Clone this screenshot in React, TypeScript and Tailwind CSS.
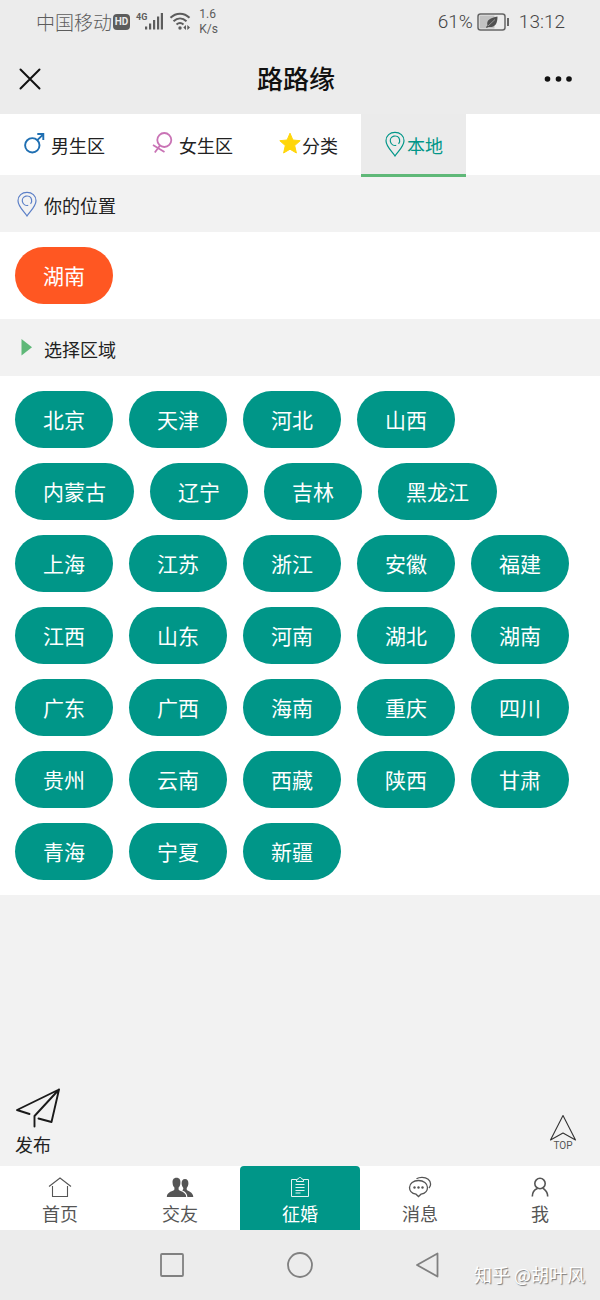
import { useState } from 'react';
import type { ReactNode } from 'react';

const provinces = [
  '北京', '天津', '河北', '山西', '内蒙古', '辽宁', '吉林', '黑龙江',
  '上海', '江苏', '浙江', '安徽', '福建', '江西', '山东', '河南', '湖北', '湖南',
  '广东', '广西', '海南', '重庆', '四川', '贵州', '云南', '西藏', '陕西', '甘肃',
  '青海', '宁夏', '新疆',
];

function PinIcon({ className }: { className?: string }) {
  return (
    <svg viewBox="0 0 22 26" fill="none" stroke="currentColor" strokeWidth="1.200" className={`w-[22px] h-[26px] shrink-0 ${className ?? ''}`}>
      <path d="M11 25C8.5 21 2 15.500 2 9.700C2 4.700 6 1.300 11 1.300S20 4.700 20 9.700C20 15.500 13.500 21 11 25Z" />
      <circle cx="11" cy="9.700" r="4.700" strokeDasharray="26 3.500" transform="rotate(75 11 9.700)" />
    </svg>
  );
}

function MaleIcon() {
  return (
    <svg viewBox="0 0 22 24" fill="none" stroke="#1f6fb2" strokeWidth="1.900" className="w-[22px] h-6 shrink-0">
      <circle cx="9.300" cy="13.300" r="7.200" />
      <path d="M14.300 8.200L20.200 2.300M14.300 2H20.300V8" />
    </svg>
  );
}

function FemaleIcon() {
  return (
    <svg viewBox="0 0 22 24" fill="none" stroke="#c973b5" strokeWidth="1.800" className="w-[22px] h-6 shrink-0">
      <circle cx="13.300" cy="8" r="7" />
      <path d="M9 13.500L3.800 20.500M2 13L13.500 20" />
    </svg>
  );
}

function StarIcon() {
  return (
    <svg viewBox="0 0 22 24" fill="#ffd60a" stroke="#ffd60a" strokeWidth="1" strokeLinejoin="round" className="w-[22px] h-6 shrink-0">
      <path d="M11 1.200L13.900 8L21.200 8.700L15.700 13.600L17.400 21L11 17.200L4.600 21L6.300 13.600L.8 8.700L8.100 8Z" />
    </svg>
  );
}

const topTabs: { id: string; label: string; icon: ReactNode; gap: string }[] = [
  { id: 'male', label: '男生区', icon: <MaleIcon />, gap: 'gap-1.5' },
  { id: 'female', label: '女生区', icon: <FemaleIcon />, gap: 'gap-1.5' },
  { id: 'category', label: '分类', icon: <StarIcon />, gap: 'gap-px' },
  { id: 'local', label: '本地', icon: <PinIcon />, gap: 'gap-px' },
];

const bottomTabs: { id: string; label: string; icon: ReactNode }[] = [
  {
    id: 'home',
    label: '首页',
    icon: (
      <svg viewBox="0 0 28 24" fill="none" stroke="currentColor" strokeWidth="1.1" className="w-7 h-6">
        <path d="M3 11.500L14 3L25 11.500M6.500 11V21.500H21.500V11" />
      </svg>
    ),
  },
  {
    id: 'friends',
    label: '交友',
    icon: (
      <svg viewBox="0 0 28 24" fill="currentColor" className="w-7 h-6">
        <path d="M10.500 2.800C7.500 2.800 6.300 5 6.600 8C6.700 10 7.400 11.600 8.400 12.600V14.500C7.500 16.500 1 16.300 .8 22H20.200C20 16.300 13.500 16.500 12.600 14.500V12.600C13.600 11.600 14.300 10 14.400 8C14.700 5 13.500 2.800 10.500 2.800Z" />
        <path d="M19 4C16.700 4 15.600 5.800 15.600 8.300C15.600 10.500 16.500 12 17.300 13C17.300 14.500 16.800 15 16.300 15.400C19.500 16.700 21.200 18.500 21.400 22H27.300C27.200 17 21.500 16.500 20.700 14.600V13C21.600 12 22.400 10.500 22.400 8.300C22.400 5.800 21.300 4 19 4Z" />
      </svg>
    ),
  },
  {
    id: 'marriage',
    label: '征婚',
    icon: (
      <svg viewBox="0 0 28 24" fill="none" stroke="currentColor" strokeWidth="1" className="w-7 h-6 opacity-90">
        <path d="M10.500 4.500H5.500V21.500H22.500V4.500H17.500M10.500 6.500V4.500L12.300 4C12.300 1.900 15.700 1.900 15.700 4L17.500 4.500V6.500Z" />
        <path d="M9.500 9.500H18.500M9.500 12.500H18.500M9.500 15.500H18.500M9.500 18H14.500" />
      </svg>
    ),
  },
  {
    id: 'messages',
    label: '消息',
    icon: (
      <svg viewBox="0 0 28 24" fill="none" stroke="currentColor" strokeWidth="1.300" className="w-7 h-6">
        <path d="M12.500 5.500C7.500 5.500 3.500 8.300 3.500 12.500C3.500 16 6.300 18.500 10 19.200L12.500 21.500L15 19.200C18.700 18.500 21.500 16 21.500 12.500C21.500 8.300 17.500 5.500 12.500 5.500Z" />
        <path d="M10.500 3.700C12 2.700 14 2.300 16 2.300C21 2.300 24.600 5 24.600 9C24.600 10.800 24 12 23 13" />
        <g fill="currentColor" stroke="none">
          <circle cx="8.500" cy="12.500" r="1.200" />
          <circle cx="12.500" cy="12.500" r="1.200" />
          <circle cx="16.500" cy="12.500" r="1.200" />
        </g>
      </svg>
    ),
  },
  {
    id: 'me',
    label: '我',
    icon: (
      <svg viewBox="0 0 28 24" fill="none" stroke="currentColor" strokeWidth="1.600" className="w-7 h-6">
        <circle cx="14" cy="8.500" r="5.200" />
        <path d="M11.500 13.500C8 14.800 6.300 17.500 6.300 21.500M17 13.200C18.500 14.800 21.700 16 21.700 21.500" />
      </svg>
    ),
  },
];

function StatusBar() {
  return (
    <div className="h-11 pl-9 pr-[35px] flex items-center justify-between text-[#5c5c5c]">
      <div className="flex items-center">
        <span className="text-[19px] leading-6 font-light">中国移动</span>
        <span className="ml-px w-[17px] h-4 rounded-sm bg-[#5c5c5c] text-[#ebebeb] text-[10px] leading-4 font-bold text-center font-['Roboto',sans-serif]">HD</span>
        <span className="ml-1.5 self-start pt-1 text-[9px] leading-3 font-bold font-['Roboto',sans-serif]">4G</span>
        <svg viewBox="0 0 18 18" fill="currentColor" className="-ml-0.5 mb-0.5 w-[18px] h-[18px]">
          <rect x="0" y="14.500" width="2.200" height="3" />
          <rect x="4" y="11.500" width="2.200" height="6" />
          <rect x="8" y="8" width="2.200" height="9.500" />
          <rect x="12" y="4.500" width="2.200" height="13" />
          <rect x="15.800" y="1" width="2.200" height="16.500" />
        </svg>
        <svg viewBox="0 0 22 18" fill="none" stroke="currentColor" strokeWidth="2" className="ml-1.5 mb-0.5 w-[22px] h-[18px]">
          <path d="M1.500 5.800C7 .3 15 .3 20.500 5.800M4.500 9.300C8.500 5.500 13.500 5.500 17.500 9.300M7.500 12.500C9.800 10.500 12.200 10.500 14.500 12.500" />
          <circle cx="11" cy="16" r="1.700" fill="currentColor" stroke="none" />
          <path d="M17 13L14.300 15.500L17 18ZM18.300 13L21 15.500L18.300 18Z" fill="currentColor" stroke="none" />
        </svg>
        <span className="ml-2 flex flex-col text-xs leading-[15px] font-['Roboto',sans-serif]">
          <span>1.6</span>
          <span>K/s</span>
        </span>
      </div>
      <div className="flex items-center font-['Roboto',sans-serif] text-[19px] leading-6 font-light text-[#444]">
        <span>61%</span>
        <svg viewBox="0 0 34 18" className="ml-1 mr-2 w-[34px] h-[18px]">
          <rect x="1" y="1" width="27" height="16" rx="2.500" fill="none" stroke="#666" strokeWidth="1.500" />
          <rect x="2.500" y="2.500" width="15" height="13" fill="#c2c2c2" />
          <rect x="30" y="5" width="2" height="8" fill="#666" />
          <path d="M20.500 3.500C20.500 11 18 14.500 11.500 14L9.500 15L9 14L10.500 12.500C9 7 13.500 4.800 20.500 3.500Z" fill="#505050" />
          <path d="M11 13L18 6.500" stroke="#b5b5b5" strokeWidth=".7" />
        </svg>
        <span>13:12</span>
      </div>
    </div>
  );
}

function SectionTitle({ icon, children }: { icon: ReactNode; children: ReactNode }) {
  return (
    <h2 className="h-[57px] px-4 flex items-center gap-1.5 bg-[#f2f2f2] text-lg leading-6">
      {icon}
      <span className="pt-0.5">{children}</span>
    </h2>
  );
}

function RegionButton({ name, active, onClick }: { name: string; active?: boolean; onClick?: () => void }) {
  return (
    <button
      type="button"
      onClick={onClick}
      className={`h-[57px] px-7 pb-0.5 rounded-full text-[21px] leading-8 text-white ${active ? 'bg-[#ff5722]' : 'bg-[#009688]'}`}
    >
      {name}
    </button>
  );
}

export default function App() {
  const [topTab, setTopTab] = useState('local');
  const [bottomTab, setBottomTab] = useState('marriage');
  const [location, setLocation] = useState('湖南');

  return (
    <div className="relative min-h-screen flex flex-col bg-[#f2f2f2] text-[#222] font-['Noto_Sans_CJK_SC',sans-serif]">
      <header className="bg-[#ececec]">
        <StatusBar />
        <div className="h-[70px] pl-[18px] pr-[26px] flex items-center justify-between text-[#111]">
          <button type="button" aria-label="关闭" className="w-8">
            <svg viewBox="0 0 24 24" fill="none" stroke="currentColor" strokeWidth="2" strokeLinecap="round" className="w-6 h-6">
              <path d="M2.500 2.500L21.500 21.500M21.500 2.500L2.500 21.500" />
            </svg>
          </button>
          <h1 className="pb-0.5 text-[26px] leading-8 font-medium">路路缘</h1>
          <button type="button" aria-label="更多" className="w-8">
            <svg viewBox="0 0 32 8" fill="currentColor" className="w-8 h-2">
              <circle cx="5.500" cy="4" r="2.800" />
              <circle cx="16.500" cy="4" r="2.800" />
              <circle cx="27" cy="4" r="2.800" />
            </svg>
          </button>
        </div>
      </header>

      {/* 顶部分类 */}
      <nav className="h-[61px] flex bg-white">
        {topTabs.map((tab) => (
          <button
            key={tab.id}
            type="button"
            onClick={() => setTopTab(tab.id)}
            className={`h-[63px] px-[23px] flex items-center text-lg leading-6 border-b-3 ${tab.gap} ${
              topTab === tab.id
                ? 'bg-[#ebebeb] border-[#5fb878] text-[#009688] z-10'
                : 'border-transparent'
            }`}
          >
            {tab.icon}
            <span className="pt-0.5">{tab.label}</span>
          </button>
        ))}
      </nav>

      <main className="flex-1 flex flex-col">
        <SectionTitle icon={<PinIcon className="text-[#5b7fc7]" />}>你的位置</SectionTitle>
        <div className="p-[15px] flex bg-white">
          <RegionButton name={location} active />
        </div>

        <SectionTitle
          icon={
            <svg viewBox="0 0 22 24" fill="#5fb878" className="w-[22px] h-6 shrink-0">
              <path d="M5.500 3L16 11.200L5.500 19.500Z" />
            </svg>
          }
        >
          选择区域
        </SectionTitle>
        <div className="p-[15px] flex flex-wrap gap-x-4 gap-y-[15px] bg-white">
          {provinces.map((name) => (
            <RegionButton key={name} name={name} onClick={() => setLocation(name)} />
          ))}
        </div>

        {/* 发布 / 回到顶部 */}
        <div className="mt-auto px-[15px] pt-4 pb-2.5 flex items-end justify-between">
          <button type="button" className="flex flex-col items-start text-lg leading-6">
            <svg viewBox="0 0 46 42" fill="none" stroke="#1a1a1a" strokeWidth="1.900" strokeLinejoin="round" strokeLinecap="round" className="mb-0.5 w-[46px] h-[42px]">
              <path d="M14.500 26L2 22L44 1.500L36.500 34L23.500 30.500M44 1.500L19.500 28V38.500" />
            </svg>
            发布
          </button>
          <button
            type="button"
            onClick={() => window.scrollTo({ top: 0 })}
            className="mr-2 mb-1.5 flex flex-col items-center text-[10px] leading-[9px] text-[#555] font-['Roboto',sans-serif]"
          >
            <svg viewBox="0 0 28 28" fill="none" stroke="#333" strokeWidth="1.1" strokeLinejoin="round" className="w-7 h-7">
              <path d="M14 2.500L26.500 27L14 20L1.500 27Z" />
            </svg>
            TOP
          </button>
        </div>
      </main>

      {/* 底部导航 */}
      <nav className="grid grid-cols-5 bg-white">
        {bottomTabs.map((tab) => (
          <button
            key={tab.id}
            type="button"
            onClick={() => setBottomTab(tab.id)}
            className={`h-16 pt-[9px] flex flex-col items-center text-lg leading-7 rounded-t-sm ${
              bottomTab === tab.id ? 'bg-[#009688] text-white' : 'text-[#555]'
            }`}
          >
            {tab.icon}
            <span>{tab.label}</span>
          </button>
        ))}
      </nav>

      {/* 系统导航键 */}
      <footer className="h-[70px] flex items-center justify-center gap-[102px] bg-[#ececec] text-[#808080]">
        <button type="button" aria-label="最近任务">
          <svg viewBox="0 0 26 26" fill="none" stroke="currentColor" strokeWidth="1.800" className="w-[26px] h-[26px]">
            <rect x="2" y="2" width="22" height="22" rx="1" />
          </svg>
        </button>
        <button type="button" aria-label="主屏幕">
          <svg viewBox="0 0 26 26" fill="none" stroke="currentColor" strokeWidth="1.800" className="w-[26px] h-[26px]">
            <circle cx="13" cy="13" r="12" />
          </svg>
        </button>
        <button type="button" aria-label="返回">
          <svg viewBox="0 0 26 26" fill="none" stroke="currentColor" strokeWidth="1.800" strokeLinejoin="round" className="w-[26px] h-[26px]">
            <path d="M2 13L22.500 1.500V24.500Z" />
          </svg>
        </button>
      </footer>

      <span className="absolute right-[15px] bottom-3.5 text-lg leading-6 text-white [text-shadow:1px_1px_1px_#777]">
        知乎 @胡叶风
      </span>
    </div>
  );
}
